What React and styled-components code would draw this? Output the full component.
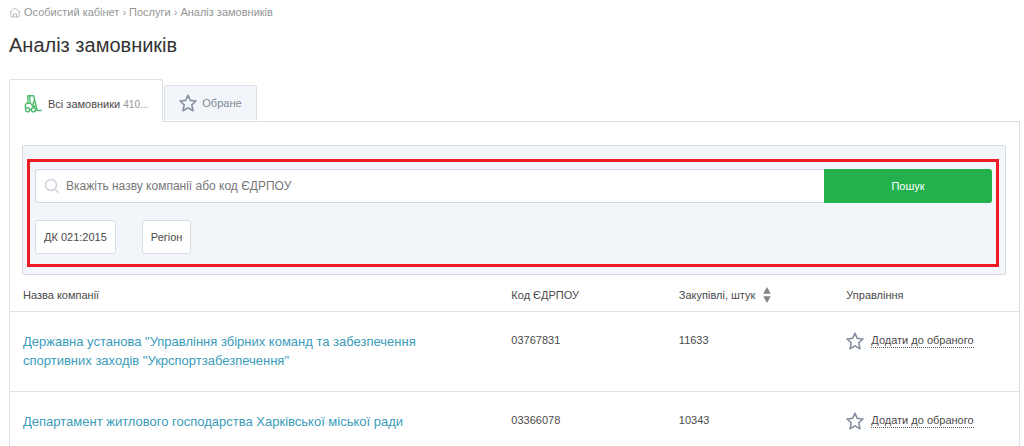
import React from "react";
import styled, { createGlobalStyle } from "styled-components";

const Colours = {
  text: "#4a4a4a",
  muted: "#959595",
  slate: "#808895",
  link: "#3a9cb9",
  border: "#dde1e6",
  panel: "#f2f6fa",
  green: "#24b14d",
  red: "#ed1c24",
};

const GlobalStyle = createGlobalStyle`
  * {
    box-sizing: border-box;
  }
  body {
    margin: 0;
    background: #fff;
    color: ${Colours.text};
    font-family: "Liberation Sans", Arial, sans-serif;
    font-size: 11px;
    line-height: 16px;
  }
  button, input {
    font: inherit;
  }
`;

const Page = styled.main`
  height: 100vh;
  overflow: hidden;
  padding: 4px 4px 0 9px;
`;

const Breadcrumbs = styled.nav`
  display: flex;
  align-items: center;
  gap: 3px;
  color: ${Colours.muted};
`;

const Crumb = styled.a`
  color: inherit;
  text-decoration: none;
`;

const Title = styled.h1`
  margin: 12px 0 20px;
  color: #333;
  font-size: 20px;
  font-weight: normal;
  line-height: 27px;
`;

const Tabs = styled.div`
  display: flex;
  align-items: flex-end;
  gap: 1px;
`;

const Tab = styled.button`
  display: flex;
  align-items: center;
  gap: ${props => (props.$active ? "6px" : "5px")};
  height: ${props => (props.$active ? "43px" : "36px")};
  margin-bottom: ${props => (props.$active ? "-1px" : "0")};
  padding: ${props => (props.$active ? "6px 14px 0" : "0 14px")};
  border: 1px solid ${Colours.border};
  border-bottom: ${props => (props.$active ? "0" : "1px solid transparent")};
  border-radius: 3px 3px 0 0;
  background: ${props => (props.$active ? "#fff" : Colours.panel)};
  background-clip: padding-box;
  color: ${props => (props.$active ? Colours.text : Colours.slate)};
  z-index: ${props => (props.$active ? 1 : 0)};
`;

const Count = styled.small`
  color: ${Colours.muted};
  font-size: 10px;
`;

const Content = styled.section`
  border: 1px solid ${Colours.border};
  padding-top: 23px;
`;

const FilterPanel = styled.div`
  margin: 0 13px 0 12px;
  padding: 13px 6px 7px 4px;
  border: 1px solid #d5dbe3;
  border-radius: 2px;
  background: ${Colours.panel};
`;

const Highlight = styled.form`
  padding: 7px 4px 10px 5px;
  border: 3px solid ${Colours.red};
`;

const SearchRow = styled.div`
  display: flex;
  height: 34px;
`;

const SearchField = styled.label`
  display: flex;
  flex: 1;
  align-items: center;
  gap: 6px;
  padding-left: 8px;
  border: 1px solid #d2d8e1;
  border-right: 0;
  border-radius: 3px 0 0 3px;
  background: #fff;
`;

const SearchInput = styled.input`
  flex: 1;
  padding: 0;
  border: 0;
  outline: 0;
  background: none;
  color: ${Colours.text};
  font-size: 12px;
  &::placeholder {
    color: #777;
    opacity: 1;
  }
`;

const SubmitButton = styled.button`
  width: 168px;
  border: 0;
  border-radius: 0 3px 3px 0;
  background: ${Colours.green};
  color: #fff;
`;

const FilterRow = styled.div`
  display: flex;
  gap: 26px;
  margin-top: 17px;
`;

const FilterButton = styled.button`
  height: 34px;
  padding: 0 8px;
  border: 1px solid #d8dde4;
  border-radius: 3px;
  background: #fff;
  color: ${Colours.text};
`;

const Table = styled.table`
  width: 100%;
  border-collapse: collapse;
  table-layout: fixed;
`;

const HeadCell = styled.th`
  width: ${props => props.$width || "auto"};
  height: 36px;
  padding: 4px 13px 0;
  border-bottom: 1px solid ${Colours.border};
  font-weight: normal;
  text-align: left;
`;

const Cell = styled.td`
  height: 80px;
  padding: 20px 13px;
  border-bottom: 1px solid ${Colours.border};
  vertical-align: top;
`;

const CompanyLink = styled.a`
  display: block;
  color: ${Colours.link};
  font-size: 13px;
  line-height: 19px;
  text-decoration: none;
`;

const SortButton = styled.button`
  display: flex;
  align-items: center;
  gap: 8px;
  padding: 0;
  border: 0;
  background: none;
  color: inherit;
`;

const FavouriteButton = styled.button`
  display: flex;
  align-items: center;
  gap: 7px;
  padding: 0;
  border: 0;
  background: none;
  color: ${Colours.text};
`;

const Dotted = styled.span`
  border-bottom: 1px dotted #555;
  line-height: 14px;
`;

const HomeIcon = () => (
  <svg width="12" height="11" viewBox="0 0 12 11" fill="none" stroke="#bdbdbd" aria-hidden="true">
    <path d="M.7 5.200 6 1l5.300 4.200M2 4.500V10h8V4.500M4.500 10V6.800h3V10" />
  </svg>
);

const StarIcon = () => (
  <svg width="18" height="18" viewBox="0 0 18 18" fill="none" stroke="#8590a0" strokeWidth="1.600" strokeLinejoin="round" aria-hidden="true">
    <path d="m9 1.200 2.300 5.200 5.700.6-4.200 3.800 1.200 5.900L9 13.900l-5 2.800 1.200-5.900L1 7l5.700-.6z" />
  </svg>
);

const ForkliftIcon = () => (
  <svg width="18" height="18" viewBox="0 0 18 18" fill="none" stroke="#4fba70" strokeWidth="1.400" strokeLinejoin="round" strokeLinecap="round" aria-hidden="true">
    <path d="M3.900 8.200V.8h5.800l3.500 14.700h4M5.500 1l.8 6.800 2.400 3.400h2.800M9.900 6 8.700 11M1.400 12.700V9.600l1.500-1.400h3.400" />
    <circle cx="3.600" cy="14.800" r="2.100" />
    <circle cx="9.500" cy="14.800" r="2.100" />
    <path d="M5.800 14.600h1.500" />
  </svg>
);

const SearchIcon = () => (
  <svg width="16" height="16" viewBox="0 0 16 16" fill="none" stroke="#d0d6df" strokeWidth="1.600" strokeLinecap="round" aria-hidden="true">
    <circle cx="7" cy="7" r="5.500" />
    <path d="m11.200 11.200 3 3" />
  </svg>
);

const SortIcon = () => (
  <svg width="8" height="16" viewBox="0 0 8 16" fill="#858585" aria-hidden="true">
    <path d="M4 0 7.800 6.800H.2zM4 16 .2 9.200h7.600z" />
  </svg>
);

const companies = [
  {
    name: 'Державна установа "Управління збірних команд та забезпечення спортивних заходів "Укрспортзабезпечення"',
    code: "03767831",
    purchases: 11633,
  },
  {
    name: "Департамент житлового господарства Харківської міської ради",
    code: "03366078",
    purchases: 10343,
  },
];

const CompanyRow = ({ company }) => (
  <tr>
    <Cell><CompanyLink href="#company">{company.name}</CompanyLink></Cell>
    <Cell>{company.code}</Cell>
    <Cell>{company.purchases}</Cell>
    <Cell>
      <FavouriteButton type="button">
        <StarIcon />
        <Dotted>Додати до обраного</Dotted>
      </FavouriteButton>
    </Cell>
  </tr>
);

const App = () => (
  <Page>
    <GlobalStyle />
    <Breadcrumbs>
      <HomeIcon />
      <Crumb href="#cabinet">Особистий кабінет</Crumb>
      <span>›</span>
      <Crumb href="#services">Послуги</Crumb>
      <span>›</span>
      <span>Аналіз замовників</span>
    </Breadcrumbs>
    <Title>Аналіз замовників</Title>
    <Tabs>
      <Tab type="button" $active>
        <ForkliftIcon />
        <span>Всі замовники <Count>410...</Count></span>
      </Tab>
      <Tab type="button">
        <StarIcon />
        Обране
      </Tab>
    </Tabs>
    <Content>
      <FilterPanel>
        <Highlight onSubmit={e => e.preventDefault()}>
          <SearchRow>
            <SearchField>
              <SearchIcon />
              <SearchInput type="text" placeholder="Вкажіть назву компанії або код ЄДРПОУ" />
            </SearchField>
            <SubmitButton type="submit">Пошук</SubmitButton>
          </SearchRow>
          <FilterRow>
            <FilterButton type="button">ДК 021:2015</FilterButton>
            <FilterButton type="button">Регіон</FilterButton>
          </FilterRow>
        </Highlight>
      </FilterPanel>
      <Table>
        <thead>
          <tr>
            <HeadCell $width="48.4%">Назва компанії</HeadCell>
            <HeadCell $width="16.6%">Код ЄДРПОУ</HeadCell>
            <HeadCell $width="16.6%">
              <SortButton type="button">Закупівлі, штук <SortIcon /></SortButton>
            </HeadCell>
            <HeadCell>Управління</HeadCell>
          </tr>
        </thead>
        <tbody>
          {companies.map(company => (
            <CompanyRow key={company.code} company={company} />
          ))}
        </tbody>
      </Table>
    </Content>
  </Page>
);

export default App;
